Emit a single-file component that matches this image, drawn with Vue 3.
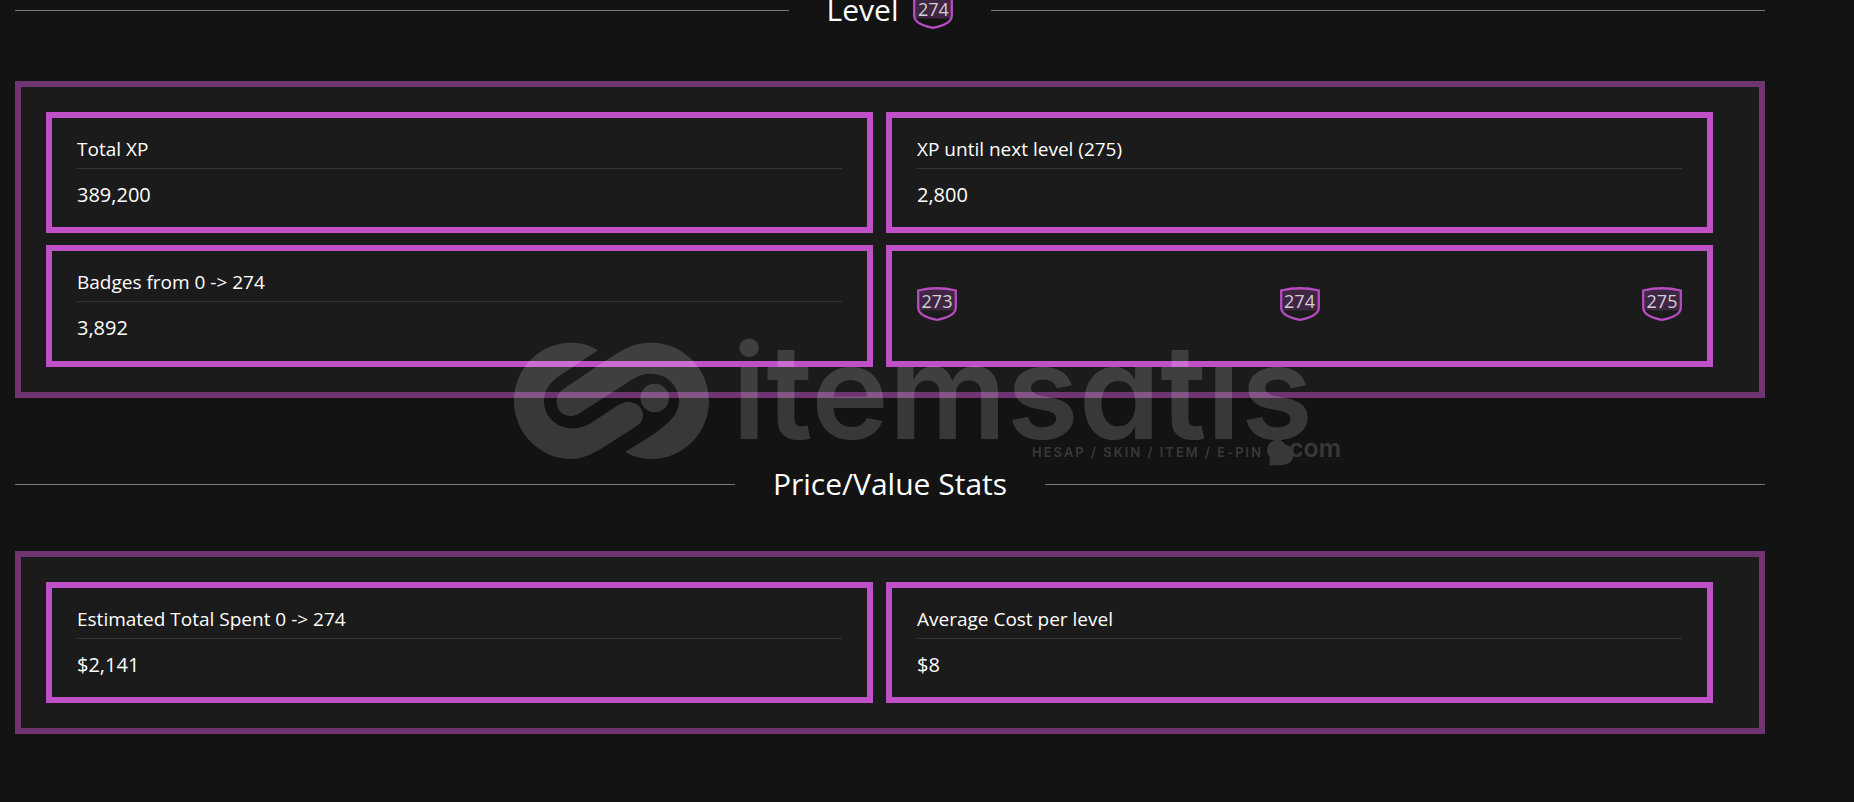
<template>
  <main class="stats-page">
    <section v-for="section in sections" :key="section.title">
      <h2 class="divider">
        <span class="divider-title">
          {{ section.title }}
          <LevelBadge v-if="section.level" class="title-badge" :level="section.level" />
        </span>
      </h2>

      <div class="panel">
        <div v-for="(card, index) in section.cards" :key="index" class="card">
          <dl v-if="card.label" class="stat">
            <dt>{{ card.label }}</dt>
            <dd>{{ card.value }}</dd>
          </dl>
          <div v-else class="badges">
            <LevelBadge v-for="level in card.levels" :key="level" :level="level" />
          </div>
        </div>
      </div>
    </section>

    <div class="watermark">
      <svg width="826" height="118" viewBox="0 0 826 118">
        <g fill="#fff">
          <path d="M83.7 8.3C76 3 67 .7 57 .7C25 .7 0 27 0 59C0 91 26 117 57 117C69 117 78 112 89.3 105.3L118 87C125 83 129 79 129 73.500C129 65 122 60 114.500 60C110 60 106 62 101 65.300L77 81C70 85 65 86.300 57.700 86.300C42 86.300 30 74 30 59C30 47 38 38 49.300 31.300Z" />
          <path d="M111 110C119 114.500 128 117 137.700 117C169 117 195 91 195 59C195 27 169 .7 137.700 .7C127 .7 118 3 109 8C90 19 70 33 51 46C45 50 42.700 54 42.700 60C42.700 68 49 74 56.700 74C61 74 65 72 69.300 68.700L116 39C123 34 129 31.700 136.700 31.700C152 31.700 165 43 165 59C165 70 158 78 149.300 84.700C138 94 124 102 111 110Z" />
          <circle cx="140.700" cy="56" r="14.300" />
          <text class="wordmark" x="218" y="97">itemsatış</text>
          <text class="tagline" x="518" y="115">HESAP / SKIN / ITEM / E-PIN</text>
          <circle cx="763" cy="108" r="10" />
          <text class="domain" x="775" y="115">com</text>
        </g>
      </svg>
    </div>
  </main>
</template>

<script setup>
import { h } from 'vue'

const sections = [
  {
    title: 'Level',
    level: 274,
    cards: [
      { label: 'Total XP', value: '389,200' },
      { label: 'XP until next level (275)', value: '2,800' },
      { label: 'Badges from 0 -> 274', value: '3,892' },
      { levels: [273, 274, 275] }
    ]
  },
  {
    title: 'Price/Value Stats',
    cards: [
      { label: 'Estimated Total Spent 0 -> 274', value: '$2,141' },
      { label: 'Average Cost per level', value: '$8' }
    ]
  }
]

// Shield with the level number on top
const LevelBadge = (props) =>
  h('span', { class: 'level-badge' }, [
    h('svg', { width: 40, height: 34, viewBox: '0 0 40 34' }, [
      h('path', { d: 'M2 4Q20 -1 38 4V23.500H2Z', fill: '#3f2642' }),
      h('path', {
        d: 'M1.200 3.500Q20 -1 38.800 3.500V20.500C38.800 27 30 31 20 32.800C10 31 1.200 27 1.200 20.500Z',
        fill: 'none',
        stroke: '#b64cbf',
        'stroke-width': 2.3
      })
    ]),
    h('span', { class: 'level-number' }, props.level)
  ])
LevelBadge.props = ['level']
</script>

<style>
body {
  background: #131313;
}

.level-badge {
  display: inline-block;
  position: relative;
  width: 40px;
  height: 34px;
}

.level-badge svg {
  display: block;
}

.level-number {
  position: absolute;
  inset: 0;
  color: #d5cfd6;
  font-size: 18px;
  line-height: 29px;
  text-align: center;
}
</style>

<style scoped>
.stats-page {
  /* the first heading is partly scrolled out of view */
  margin: -14px 89px 0 15px;
  color: #fff;
  font-family: 'Open Sans', 'Noto Sans', sans-serif;
  font-size: 20px;
  line-height: 27px;
}

.divider {
  display: flex;
  align-items: center;
  margin: 0 0 46px;
  font-size: 30px;
  font-weight: 400;
  line-height: 39px;
}

.divider::before,
.divider::after {
  content: '';
  flex: 1;
  border-top: 1px solid #777;
}

.divider-title {
  display: flex;
  align-items: center;
  padding: 0 38px 2px;
}

.title-badge {
  margin: 9px 0 4px 15px;
}

.panel {
  display: grid;
  grid-template-columns: 1fr 1fr;
  gap: 12px 13px;
  margin-bottom: 66px;
  padding: 25px 46px 25px 25px;
  border: 6px solid #6f3572;
  background: #1b1b1b;
}

.card {
  padding: 17px 25px 19px;
  border: 6px solid #c050c8;
}

.stat,
.stat dd {
  margin: 0;
}

.stat dt {
  margin-bottom: 12px;
  padding: 1px 0 5px;
  border-bottom: 1px solid #353535;
  font-size: 19px;
}

.badges {
  display: flex;
  align-items: center;
  justify-content: space-between;
  height: 72px;
  padding-bottom: 2px;
}

.watermark {
  position: fixed;
  inset: 0;
  display: flex;
  align-items: center;
  justify-content: center;
  opacity: 0.16;
  pointer-events: none;
}

.watermark svg {
  overflow: visible;
}

.wordmark {
  font-family: Inter, sans-serif;
  font-size: 131px;
  font-weight: 600;
  font-feature-settings: 'cv11';
}

.tagline {
  font-family: Inter, sans-serif;
  font-size: 13px;
  font-weight: 600;
  letter-spacing: 2px;
}

.domain {
  font-family: Inter, sans-serif;
  font-size: 25px;
  font-weight: 600;
}
</style>
